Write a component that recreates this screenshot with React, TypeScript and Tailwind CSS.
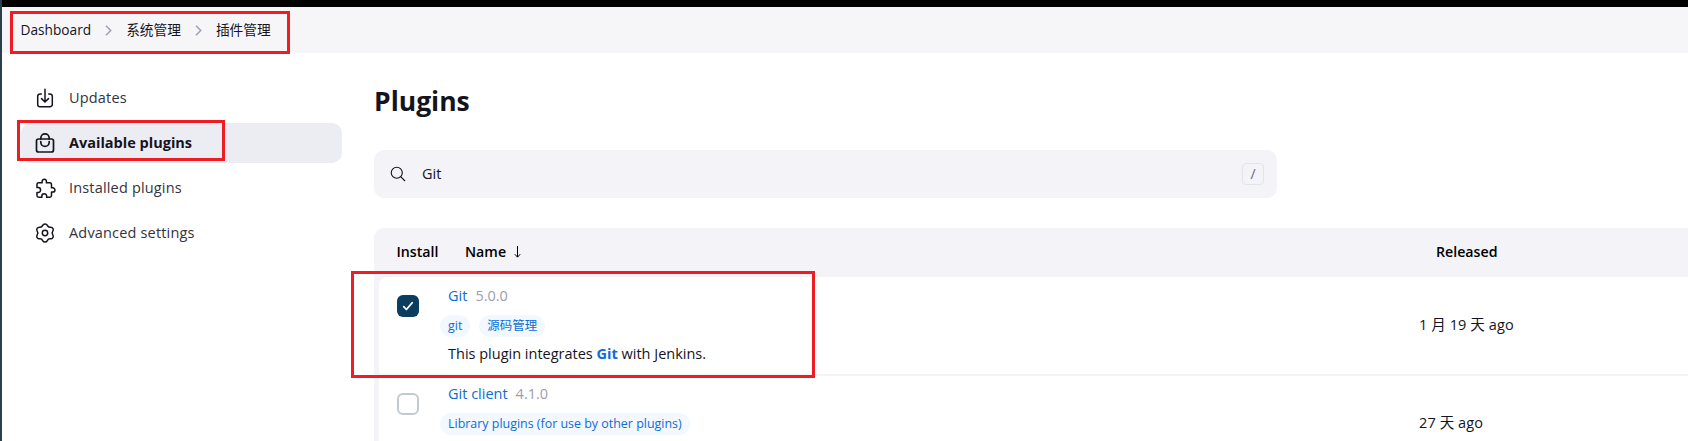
import type { ReactNode } from "react";
import { IoSearchOutline } from "react-icons/io5";

function Chevron() {
  return (
    <svg className="mx-[14px] h-[11px] w-[7px]" viewBox="0 0 7 11" fill="none" stroke="#a3a3b8" strokeWidth="1.6">
      <path d="M1 .8 5.7 5.5 1 10.2" />
    </svg>
  );
}

function NavIcon({ children }: { children: ReactNode }) {
  return (
    <svg
      className="size-[24px] shrink-0"
      viewBox="0 0 24 24"
      fill="none"
      stroke="#14141f"
      strokeWidth="1.5"
      strokeLinecap="round"
      strokeLinejoin="round"
    >
      {children}
    </svg>
  );
}

function DownloadIcon() {
  return (
    <NavIcon>
      <path d="M8.3 7.900H7a2.300 2.300 0 0 0-2.300 2.300v8.200A2.300 2.300 0 0 0 7 20.700h10a2.300 2.300 0 0 0 2.300-2.300v-8.200A2.300 2.300 0 0 0 17 7.900h-1.300" />
      <path d="M12 3.300v12.400M8.500 12.600l3.500 3.400 3.500-3.400" />
    </NavIcon>
  );
}

function BagIcon() {
  return (
    <NavIcon>
      <rect x="3.500" y="8" width="17" height="13" rx="2" strokeWidth="1.700" />
      <path
        strokeWidth="1.700"
        d="M7.800 8V7a4.200 4.200 0 0 1 8.400 0v1M7.800 10.500v.700a4.200 4.200 0 0 0 8.400 0v-.700"
      />
    </NavIcon>
  );
}

function PuzzleIcon() {
  return (
    <NavIcon>
      <g transform="translate(1.900 1.200) scale(.0432)" strokeWidth="35">
        <path d="M413.660 246.100H386a2 2 0 0 1-2-2v-77.240A38.860 38.860 0 0 0 345.140 128H267.900a2 2 0 0 1-2-2V98.340c0-27.140-21.500-49.860-48.640-50.330a49.530 49.530 0 0 0-50.400 49.510V126a2 2 0 0 1-2 2H87.620A39.740 39.740 0 0 0 48 167.620V238a2 2 0 0 0 2 2h26.910c29.370 0 53.680 25.480 54.090 54.850.42 29.870-23.510 57.150-53.290 57.150H50a2 2 0 0 0-2 2v70.380A39.740 39.740 0 0 0 87.620 464H158a2 2 0 0 0 2-2v-20.930c0-30.280 24.750-56.350 55-57.060 30.100-.700 57 20.310 57 50.280V462a2 2 0 0 0 2 2h71.140A38.860 38.860 0 0 0 384 425.140v-78a2 2 0 0 1 2-2h28.480c27.630 0 49.520-22.670 49.520-50.400s-23.200-48.640-50.340-48.640Z" />
      </g>
    </NavIcon>
  );
}

function gearPoint(degrees: number) {
  const angle = (degrees * Math.PI) / 180;
  return `${(12 + 8 * Math.sin(angle)).toFixed(2)} ${(12 - 8 * Math.cos(angle)).toFixed(2)}`;
}

// Six rounded lobes joined by shallow inward curves, one lobe pointing straight up.
const gearOutline =
  `M${gearPoint(-17)}` +
  [0, 60, 120, 180, 240, 300].map((a) => `A2.6 2.6 0 0 1 ${gearPoint(a + 17)}A3 3 0 0 0 ${gearPoint(a + 43)}`).join("") +
  "Z";

function SettingsIcon() {
  return (
    <NavIcon>
      <circle cx="12" cy="12" r="2.700" />
      <path d={gearOutline} />
    </NavIcon>
  );
}

function NavItem({ icon, label, active }: { icon: ReactNode; label: string; active?: boolean }) {
  return (
    <a
      className={`flex h-10 items-center gap-[12px] rounded-[10px] pl-[12px] text-[14.5px] text-[#14141f] ${
        active ? "bg-[#ecedf3] font-bold" : "tracking-[0.17px]"
      }`}
    >
      {icon}
      <span className={active ? "" : "text-[#333340]"}>{label}</span>
    </a>
  );
}

function Checkbox({ checked }: { checked?: boolean }) {
  return checked ? (
    <span className="flex size-[22px] items-center justify-center rounded-[6px] bg-[#0b3d61]">
      <svg className="size-[12px]" viewBox="0 0 12 12" fill="none" stroke="white" strokeWidth="1.7" strokeLinecap="round" strokeLinejoin="round">
        <path d="M1.700 6.700 4.400 9.500 10.300 2.600" />
      </svg>
    </span>
  ) : (
    <span className="block size-[22px] rounded-[6px] border-2 border-[#c0cbd0] bg-white" />
  );
}

function PluginRow(props: {
  checked?: boolean;
  name: string;
  version: string;
  tags: string[];
  released: string;
  first?: boolean;
  children?: ReactNode;
}) {
  return (
    <div
      className={`flex shrink-0 items-start bg-white ${
        props.first ? "h-[97px] rounded-tl-[8px] rounded-bl-[3px] pt-px" : "h-[96px] rounded-tl-[3px]"
      }`}
    >
      <div className="w-[69px] pt-[17px] pl-[18px]">
        <Checkbox checked={props.checked} />
      </div>
      <div className="w-[971px] pt-[8px]">
        <div className="flex h-5 items-center gap-[8px] text-[14.5px] leading-5">
          <a className="text-[#0f6bd8]">{props.name}</a>
          <span className="text-[#9e9cb0]">{props.version}</span>
        </div>
        <div className="mt-[9px] -ml-2 flex gap-[9px]">
          {props.tags.map((tag) => (
            <span key={tag} className="h-[22px] rounded-full bg-[#f2f8fe] px-2 text-[12.45px] leading-[22px] text-[#0f6bd8]">
              {tag}
            </span>
          ))}
        </div>
        <div className="mt-[6px] text-[14.5px] leading-[22px] text-[#14141f]">{props.children}</div>
      </div>
      <div className="flex h-[94px] items-center text-[14.5px] tracking-[0.1px] text-[#14141f]">{props.released}</div>
    </div>
  );
}

export default function App() {
  return (
    <div className="relative flex h-[441px] w-[1688px] overflow-hidden bg-white font-['Open_Sans','Noto_Sans_CJK_SC',sans-serif]">
      <div className="w-[2px] shrink-0 bg-[#2b3e4b]" />
      <div className="flex min-w-0 flex-1 flex-col">
        <div className="h-[7px] shrink-0 bg-black" />
        <nav className="flex h-[46px] shrink-0 items-center bg-[#f6f6f9] pl-[18.5px] text-[13.7px] text-[#14141f]">
          <span>Dashboard</span>
          <Chevron />
          <span>系统管理</span>
          <Chevron />
          <span>插件管理</span>
        </nav>
        <div className="flex min-h-0 flex-1">
          <aside className="ml-[19px] flex w-[321px] shrink-0 flex-col gap-[5px] pt-[25px]">
            <NavItem icon={<DownloadIcon />} label="Updates" />
            <NavItem icon={<BagIcon />} label="Available plugins" active />
            <NavItem icon={<PuzzleIcon />} label="Installed plugins" />
            <NavItem icon={<SettingsIcon />} label="Advanced settings" />
          </aside>
          <main className="ml-8 flex min-w-0 flex-1 flex-col">
            <h1 className="mt-[30px] text-[26.5px] leading-[36px] font-bold text-[#14141f]">Plugins</h1>
            <div className="mt-[31px] flex h-12 w-[903px] shrink-0 items-center rounded-[10px] bg-[#f3f3f8] pr-[13px] pl-[15px] text-[14.5px] text-[#14141f]">
              <IoSearchOutline className="text-[18px]" />
              <span className="ml-[15px] flex-1">Git</span>
              <kbd className="flex size-[22px] items-center justify-center rounded-[4px] border border-[#e3e3ea] pb-px font-[inherit] text-[14px] text-[#6b6880]">
                /
              </kbd>
            </div>
            <div className="mt-[30px] flex min-h-0 flex-1 flex-col rounded-tl-[10px] bg-[#f3f3f8] pl-[5px]">
              <div className="flex h-[49px] shrink-0 items-center pb-[2px] text-[14.2px] font-semibold text-black">
                <span className="w-[69px] pl-[17.5px]">Install</span>
                <span className="flex w-[988px] items-center pl-[17px]">
                  Name
                  <svg className="mt-[2px] ml-[8px] h-[12px] w-[7px]" viewBox="0 0 7 12" fill="none" stroke="currentColor">
                    <path d="M3.500 0v11M.800 8.200l2.700 3 2.700-3" />
                  </svg>
                </span>
                <span>Released</span>
              </div>
              <div className="flex flex-col gap-[2px]">
                <PluginRow first checked name="Git" version="5.0.0" tags={["git", "源码管理"]} released="1 月 19 天 ago">
                  This plugin integrates <b className="text-[#0f6bd8]">Git</b> with Jenkins.
                </PluginRow>
                <PluginRow name="Git client" version="4.1.0" tags={["Library plugins (for use by other plugins)"]} released="27 天 ago" />
              </div>
            </div>
          </main>
        </div>
      </div>
      <div className="absolute top-[11px] left-[10px] h-[43px] w-[280px] border-3 border-[#f01c24]" />
      <div className="absolute top-[120px] left-[17px] h-[41px] w-[208px] border-3 border-[#f01c24]" />
      <div className="absolute top-[271px] left-[351px] h-[107px] w-[464px] border-3 border-[#f01c24]" />
    </div>
  );
}
